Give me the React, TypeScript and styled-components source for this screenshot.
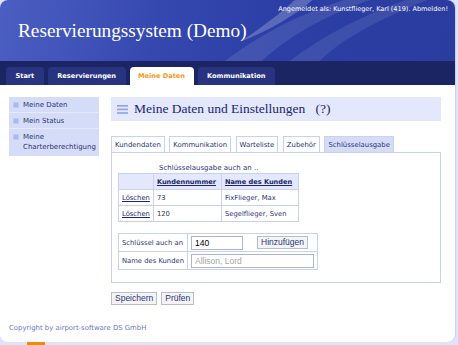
import styled, { createGlobalStyle } from "styled-components";

const GlobalStyle = createGlobalStyle`
    html, body {
        margin: 0;
        padding: 0;
        background: #dfe4fb;
        font-family: "DejaVu Sans", Verdana, sans-serif;
    }
`;

const Page = styled.div`
    width: 455px;
    height: 342px;
    background: #fff;
    border-radius: 8px;
    overflow: hidden;
    display: flex;
    flex-direction: column;
    box-shadow: 1px 0 0 #c9d1f7;
`;

const Header = styled.div`
    position: relative;
    height: 61px;
    flex-shrink: 0;
    background: linear-gradient(100deg, #4b5fc2 0%, #3448b0 35%, #2c3fa6 60%, #2a3c9e 100%);
    overflow: hidden;
`;

const Swirl = styled.svg`
    position: absolute;
    left: 0;
    top: 0;
    pointer-events: none;
`;

const HeaderInner = styled.div`
    position: relative;
    display: flex;
    flex-direction: column;
    padding: 5px 7px 0 18px;
`;

const Login = styled.div`
    align-self: flex-end;
    color: #fff;
    font-size: 6.5px;
    line-height: 9px;
`;

const Title = styled.h1`
    margin: 5px 0 0;
    font-family: "Liberation Serif", "Times New Roman", serif;
    font-weight: normal;
    font-size: 19.3px;
    line-height: 24px;
    color: #fff;
`;

const NavBar = styled.div`
    height: 24px;
    flex-shrink: 0;
    background: #1b2563;
    display: flex;
    align-items: flex-end;
    gap: 4px;
    padding-left: 6px;
`;

const NavTab = styled.div<{ active?: boolean }>`
    height: 18px;
    display: flex;
    align-items: center;
    padding: 0 ${p => (p.active ? 8.5 : 9.5)}px;
    border-radius: 4px 4px 0 0;
    background: ${p => (p.active ? "#fff" : "#283480")};
    color: ${p => (p.active ? "#f29a1c" : "#fff")};
    font-size: 6.6px;
    font-weight: bold;
`;

const Body = styled.div`
    flex: 1;
    display: flex;
    padding: 12px 14px 0 9px;
    gap: 12px;
`;

const Sidebar = styled.div`
    width: 90px;
    flex-shrink: 0;
    align-self: flex-start;
    background: #d5dcf8;
    display: flex;
    flex-direction: column;
`;

const SideItem = styled.div`
    display: flex;
    gap: 4px;
    padding: 3px 4px 2px 4px;
    border-bottom: 1px solid #e6eafc;
    font-size: 7px;
    line-height: 10px;
    color: #2c3578;
    &:last-child {
        border-bottom: none;
        padding-bottom: 4px;
    }
`;

const Bullet = styled.span`
    width: 4px;
    height: 4px;
    margin-top: 2px;
    flex-shrink: 0;
    background: #aab8f0;
    border: 1px solid #c0cbf5;
`;

const Main = styled.div`
    flex: 1;
    display: flex;
    flex-direction: column;
`;

const Heading = styled.div`
    height: 24px;
    background: #e4e8fc;
    display: flex;
    align-items: center;
    gap: 6px;
    padding-left: 6px;
    font-family: "Liberation Serif", "Times New Roman", serif;
    font-size: 13.5px;
    color: #1c2570;
`;

const TabRow = styled.div`
    display: flex;
    gap: 4.5px;
    margin-top: 15px;
`;

const Tab = styled.div<{ active?: boolean }>`
    height: 15px;
    display: flex;
    align-items: center;
    padding: 0 3px;
    border: 1px solid #c8d0f4;
    border-bottom: none;
    background: ${p => (p.active ? "#d5dcf8" : "#fff")};
    font-size: 6.9px;
    color: #2c3578;
`;

const Panel = styled.div`
    border: 1px solid #c8d0f4;
    height: 131px;
    box-sizing: border-box;
    padding: 10px 6px 0 6px;
    display: flex;
    flex-direction: column;
    align-items: flex-start;
`;

const Caption = styled.div`
    margin-left: 41px;
    font-size: 7px;
    line-height: 10px;
    color: #2c3578;
`;

const Grid = styled.table`
    border-collapse: collapse;
    font-size: 6.8px;
    color: #2c3578;
    white-space: nowrap;
    td, th {
        border: 1px solid #c8d0f4;
        text-align: left;
        padding: 0 3px;
        height: 16px;
        box-sizing: border-box;
    }
    th {
        background: #e4e8fc;
        font-size: 6.6px;
    }
`;

const Link = styled.a<{ bold?: boolean }>`
    color: #1c2570;
    text-decoration: underline;
    font-weight: ${p => (p.bold ? "bold" : "normal")};
`;

const FormTable = styled(Grid)`
    margin-top: 11px;
    td {
        height: 18px;
    }
`;

const Input = styled.input<{ w: number }>`
    width: ${p => p.w}px;
    height: 14px;
    box-sizing: border-box;
    border: 1px solid #a9b4d8;
    font-family: "Liberation Sans", Arial, sans-serif;
    font-size: 8.5px;
    padding: 0 3px;
    color: #000;
    vertical-align: middle;
    &::placeholder {
        color: #a6a6a6;
    }
`;

const Button = styled.button`
    height: 13px;
    padding: 0 3px;
    background: #f4f4f6;
    border: 1px solid #b9bdc9;
    font-family: "Liberation Sans", Arial, sans-serif;
    font-size: 8.5px;
    color: #2c3578;
    line-height: 11px;
    vertical-align: middle;
`;

const Actions = styled.div`
    display: flex;
    gap: 4px;
    margin-top: 9px;
`;

const Footer = styled.div`
    margin-top: auto;
    padding: 0 9px 10px;
    font-size: 6.9px;
    color: #6a78c4;
    a {
        color: #6a78c4;
    }
`;

const Orange = styled.div`
    margin-left: 27px;
    width: 18px;
    height: 3px;
    background: #f08a00;
`;

const HeadingIcon = () => (
    <svg width="11" height="9" viewBox="0 0 11 9">
        <rect x="0" y="0" width="11" height="1.6" fill="#8f9ee6" />
        <rect x="0" y="3.6" width="11" height="1.6" fill="#8f9ee6" />
        <rect x="0" y="7.2" width="11" height="1.6" fill="#8f9ee6" />
    </svg>
);

const App = () => {
    return (
        <>
            <GlobalStyle />
            <Page>
                <Header>
                    <Swirl width="455" height="61" viewBox="0 0 455 61">
                        <path d="M225 61 C 260 35, 300 12, 360 -5 L 385 -5 C 330 12, 290 35, 262 61 Z" fill="#ffffff" opacity="0.1" />
                        <path d="M240 42 C 265 25, 285 10, 300 -5 L 318 -5 C 300 12, 275 28, 240 42 Z" fill="#ffffff" opacity="0.22" />
                        <path d="M290 61 C 320 38, 360 15, 420 -5 L 440 -5 C 380 18, 340 40, 320 61 Z" fill="#ffffff" opacity="0.09" />
                    </Swirl>
                    <HeaderInner>
                        <Login>Angemeldet als: Kunstflieger, Karl (419). Abmelden!</Login>
                        <Title>Reservierungssystem (Demo)</Title>
                    </HeaderInner>
                </Header>
                <NavBar>
                    <NavTab>Start</NavTab>
                    <NavTab>Reservierungen</NavTab>
                    <NavTab active>Meine Daten</NavTab>
                    <NavTab>Kommunikation</NavTab>
                </NavBar>
                <Body>
                    <Sidebar>
                        <SideItem><Bullet />Meine Daten</SideItem>
                        <SideItem><Bullet />Mein Status</SideItem>
                        <SideItem><Bullet />Meine<br />Charterberechtigung</SideItem>
                    </Sidebar>
                    <Main>
                        <Heading>
                            <HeadingIcon />
                            <span>Meine Daten und Einstellungen&nbsp;&nbsp;&nbsp;(?)</span>
                        </Heading>
                        <TabRow>
                            <Tab>Kundendaten</Tab>
                            <Tab>Kommunikation</Tab>
                            <Tab>Warteliste</Tab>
                            <Tab>Zubehör</Tab>
                            <Tab active>Schlüsselausgabe</Tab>
                        </TabRow>
                        <Panel>
                            <Caption>Schlüsselausgabe auch an ..</Caption>
                            <Grid>
                                <thead>
                                    <tr>
                                        <th style={{ width: 34 }}></th>
                                        <th style={{ width: 68 }}><Link bold>Kundennummer</Link></th>
                                        <th style={{ width: 77 }}><Link bold>Name des Kunden</Link></th>
                                    </tr>
                                </thead>
                                <tbody>
                                    <tr>
                                        <td><Link>Löschen</Link></td>
                                        <td>73</td>
                                        <td>FixFlieger, Max</td>
                                    </tr>
                                    <tr>
                                        <td><Link>Löschen</Link></td>
                                        <td>120</td>
                                        <td>Segelflieger, Sven</td>
                                    </tr>
                                </tbody>
                            </Grid>
                            <FormTable>
                                <tbody>
                                    <tr>
                                        <td style={{ width: 69 }}>Schlüssel auch an</td>
                                        <td style={{ width: 130 }}>
                                            <Input w={52} defaultValue="140" />
                                            <Button style={{ marginLeft: 14 }}>Hinzufügen</Button>
                                        </td>
                                    </tr>
                                    <tr>
                                        <td>Name des Kunden</td>
                                        <td><Input w={123} placeholder="Allison, Lord" /></td>
                                    </tr>
                                </tbody>
                            </FormTable>
                        </Panel>
                        <Actions>
                            <Button>Speichern</Button>
                            <Button>Prüfen</Button>
                        </Actions>
                    </Main>
                </Body>
                <Footer>Copyright by <a>airport-software DS GmbH</a></Footer>
            </Page>
            <Orange />
        </>
    );
};

export default App;
